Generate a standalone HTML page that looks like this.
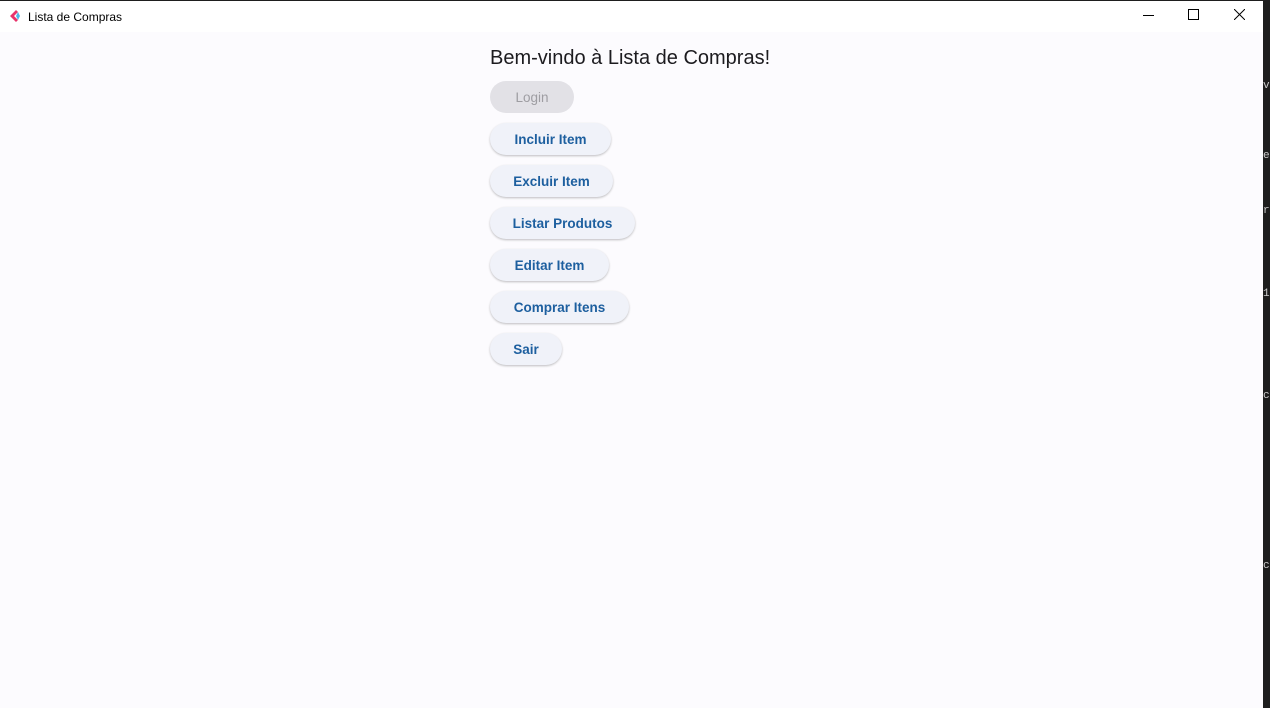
<!DOCTYPE html>
<html><head><style>
body{margin:0;width:1270px;height:708px;overflow:hidden;background:#1e1e1e;font-family:"Liberation Sans",sans-serif;position:relative}
.win{position:absolute;left:0;top:1px;width:1263px;height:707px;background:#fcfbfe}
.tb{position:absolute;left:0;top:0;width:1263px;height:31px;background:#fff}
.tt{position:absolute;left:28px;top:9px;font-size:12px;color:#000}
.h{position:absolute;left:490px;top:46px;font-size:20px;color:#1c1b1f}
.b{position:absolute;left:490px;height:32px;border-radius:16px;background:#f0f2f9;box-shadow:0 1px 2px rgba(0,0,0,.25);color:#1d5f9f;font-size:13.5px;font-weight:bold;line-height:34px;text-align:center;box-sizing:border-box}
.dis{background:#e2e1e6;color:#9e9da2;box-shadow:none;font-weight:normal}
.ctl{position:absolute;top:8px}
.code{position:absolute;left:1263px;font-family:"Liberation Mono",monospace;font-size:11px;color:#ccc}
</style></head><body>
<div class="win">
<div class="tb">
<svg style="position:absolute;left:8px;top:8px" width="14" height="14"><path d="M8 1 L2 7 L8 13 L10 11 L6 7 L10 3Z" fill="#e8336b"/><path d="M10 3 L12 7 L10 11 L8 7Z" fill="#4fb6e8"/></svg>
<div class="tt">Lista de Compras</div>
<svg class="ctl" style="left:1143px;top:14px" width="11" height="2"><rect width="11" height="1" fill="#000"/></svg>
<svg class="ctl" style="left:1188px" width="11" height="11"><rect x=".5" y=".5" width="10" height="10" fill="none" stroke="#000"/></svg>
<svg class="ctl" style="left:1234px" width="11" height="11"><path d="M0 0L11 11M11 0L0 11" stroke="#000"/></svg>
</div>
<div class="h">Bem-vindo à Lista de Compras!</div>
<div class="b dis" style="top:80px;width:84px">Login</div>
<div class="b" style="top:122px;width:121px">Incluir Item</div>
<div class="b" style="top:164px;width:123px">Excluir Item</div>
<div class="b" style="top:206px;width:145px">Listar Produtos</div>
<div class="b" style="top:248px;width:119px">Editar Item</div>
<div class="b" style="top:290px;width:139px">Comprar Itens</div>
<div class="b" style="top:332px;width:72px">Sair</div>
</div>
<div class="code" style="top:80px">v</div>
<div class="code" style="top:150px">e</div>
<div class="code" style="top:205px">r</div>
<div class="code" style="top:288px">1</div>
<div class="code" style="top:390px">c</div>
<div class="code" style="top:560px">c</div>
</body></html>
